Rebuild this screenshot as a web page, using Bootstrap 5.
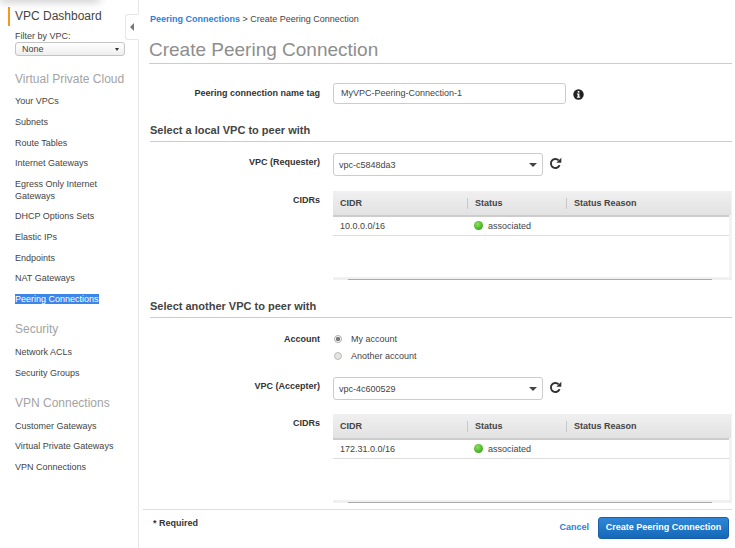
<!DOCTYPE html>
<html lang="en">
  <head>
    <meta charset="UTF-8" />
    <meta name="viewport" content="width=device-width, initial-scale=1.0" />
    <title>Create Peering Connection</title>
    <link
      rel="stylesheet"
      href="https://cdn.jsdelivr.net/npm/bootstrap@5.3.0/dist/css/bootstrap.min.css"
    />
    <style>
      html, body { height: 548px; overflow: hidden; }
      body { font-family: "Liberation Sans", Arial, sans-serif; font-size: 9px; color: #444; background: #fff; position: relative; }

      /* left nav */
      .side-nav { width: 139px; height: 548px; flex: none; border-right: 1px solid #e6e6e6; padding: 7px 0 0 15px; position: relative; }
      .top-shade { position: absolute; left: 0; top: -8px; width: 100px; height: 8px; box-shadow: 0 2px 8px rgba(0,0,0,.22); }
      .dash-title { font-size: 12px; line-height: 19px; color: #444; margin-left: -7px; padding-left: 5px; border-left: 2px solid #f7981d; height: 19px; }
      .filter-label { line-height: 12px; margin-top: 4px; color: #444; }
      .filter-select { width: 110px; height: 14px; border: 1px solid #c4c4c4; border-radius: 3px; background: linear-gradient(#fff, #eee); padding-left: 6px; line-height: 12px; color: #444; }
      .filter-caret { width: 0; height: 0; border-left: 2px solid transparent; border-right: 2px solid transparent; border-top: 3px solid #333; margin-right: 5px; }
      .nav-head { font-size: 12px; line-height: 16px; color: #a3a3a3; }
      .nav-head-first { margin-top: 15px; margin-bottom: 4px; }
      .nav-head-sec { margin-top: 11.6px; margin-bottom: 5px; }
      .nav-head-vpn { margin-top: 12.4px; margin-bottom: 4px; }
      .side-links { list-style: none; padding: 0; margin: 0; }
      .side-links li { line-height: 12px; padding: 4.32px 0; color: #444; }
      .side-links .active-link { background: #3b86e8; color: #fff; }
      .collapse-tab { position: absolute; left: 125px; top: 14px; width: 14px; height: 26px; background: #fff; border: 1px solid #e6e6e6; border-right: 1px solid #fff; border-radius: 3px 0 0 3px; }
      .collapse-tab span { border-top: 4px solid transparent; border-bottom: 4px solid transparent; border-right: 4px solid #777; }

      /* main column */
      .main-pane { width: 596px; flex: none; padding-left: 10px; }
      .crumbs { line-height: 12px; margin: 13px 0 0 1px; color: #444; }
      .crumbs b, .cancel-link { color: #2d7fd8; }
      .page-title { font-size: 19px; line-height: 26px; font-weight: 400; color: #8e8e8e; margin: 12px 0 0; height: 26px; border-bottom: 1px solid #ccc; width: 583px; box-sizing: content-box; }
      .form-line { display: flex; align-items: flex-start; }
      .line-label { width: 171px; flex: none; text-align: right; font-weight: 700; color: #333; margin-right: 13px; margin-bottom: 0; }
      .name-input { width: 233px; height: 21px; border: 1px solid #ccc; border-radius: 3px; padding: 0 7px 2px; font-size: 9px; color: #444; font-family: inherit; }
      .vpc-select.form-select { width: 210px; height: 23px; min-height: 0; border: 1px solid #ccc; border-radius: 3px; padding: 1px 5px 0; font-size: 9px; color: #444; line-height: 21px; box-shadow: none;
        background-size: 8px 4px; background-position: right 5px center;
        background-image: url("data:image/svg+xml,%3csvg xmlns='http://www.w3.org/2000/svg' viewBox='0 0 8 4'%3e%3cpath fill='%23444' d='M0 0h8L4 4z'/%3e%3c/svg%3e"); }
      .sect-head { font-size: 11px; line-height: 14px; font-weight: 700; color: #444; margin: 19px 0 0 1px; padding-bottom: 4px; border-bottom: 1px solid #ccc; width: 582px; }

      .mt-name { margin-top: 19px; }
      .name-label { line-height: 21px; }
      .info-ico { margin: 6px 0 0 7px; }
      .pick-line { margin-top: 11px; }
      .pick-line-two { margin-top: 15px; }
      .pick-label { line-height: 19px; }
      .refresh-ico { margin: 4px 0 0 6px; }
      .cidr-line { margin-top: 15px; }
      .cidr-line-two { margin-top: 14px; }
      .cidr-label { padding-top: 3px; line-height: 12px; }

      /* cidr tables */
      .cidr-wrap { width: 399px; height: 89px; background: linear-gradient(to left, #f3f3f3 3px, transparent 3px); }
      .cidr-grid { width: 399px; table-layout: fixed; margin: 0; border-collapse: collapse; font-size: 9px; color: #444; }
      .cidr-grid th { height: 25px; padding: 1px 0 0 7px; background: linear-gradient(#f0f0f0, #e2e2e2); border-bottom: 2px solid #ccc; color: #444; font-weight: 700; position: relative; box-shadow: none; vertical-align: middle; }
      .cidr-grid th + th { padding-left: 8px; }
      .cidr-grid th + th::before { content: ""; position: absolute; left: 0; top: 7px; height: 11px; border-left: 1px solid #c8c8c8; }
      .cidr-grid td { height: 19px; padding: 1px 0 0 7px; border-bottom: 1px solid #ddd; background: #fff; color: #444; box-shadow: none; vertical-align: middle; }
      .cidr-grid td:last-child { border-right: 3px solid #f3f3f3; }
      .c-one { width: 134px; }
      .c-two { width: 99px; }
      .green-dot { width: 9px; height: 9px; border-radius: 50%; background: radial-gradient(circle at 40% 35%, #8fe060, #3fae1e 70%); display: inline-block; margin-right: 5px; vertical-align: -1px; }
      .h-scroll { height: 3px; background: #f0f0f0; padding-left: 15px; padding-right: 20px; }
      .h-scroll div { height: 3px; border-bottom: 1px solid #aaa; }

      /* radios */
      .acct-line { margin-top: 15px; }
      .acct-line .line-label { line-height: 12px; margin-right: 14px; }
      .radio-stack { gap: 5px; }
      .radio-text { margin-left: 9px; }
      .acct-radio.form-check-input { width: 8px; height: 8px; margin: 0; border: 1px solid #bbb; background-color: #e4e4e4; flex: none; box-shadow: none; }
      .acct-radio.form-check-input:checked { border-color: #aaa; background-color: #fff; background-image: radial-gradient(circle, #777 0 2px, transparent 2.3px); background-size: auto; }
      .acct-option { line-height: 12px; color: #444; }

      /* footer */
      .foot-bar { width: 589px; margin-left: -6px; margin-top: 6px; padding: 7px 3px 0 10px; border-top: 1px solid #ddd; }
      .req-note { font-weight: 700; color: #333; line-height: 12px; }
      .cancel-link { font-weight: 700; text-decoration: none; margin-right: 9px; }
      .create-btn.btn { width: 131px; height: 22px; padding: 0; font-size: 9px; font-weight: 700; color: #fff; border: 1px solid #1a5ea8; border-radius: 3px; background: linear-gradient(#2f86d8, #1568b8); }
    </style>
  </head>
  <body class="d-flex">
    <!-- Sidebar -->
    <div class="side-nav">
      <div class="top-shade"></div>
      <div class="dash-title">VPC Dashboard</div>
      <div class="filter-label">Filter by VPC:</div>
      <div class="filter-select d-flex justify-content-between align-items-center">
        <span>None</span><span class="filter-caret"></span>
      </div>
      <div class="nav-head nav-head-first">Virtual Private Cloud</div>
      <ul class="side-links">
        <li>Your VPCs</li>
        <li>Subnets</li>
        <li>Route Tables</li>
        <li>Internet Gateways</li>
        <li>Egress Only Internet Gateways</li>
        <li>DHCP Options Sets</li>
        <li>Elastic IPs</li>
        <li>Endpoints</li>
        <li>NAT Gateways</li>
        <li><span class="active-link">Peering Connections</span></li>
      </ul>
      <div class="nav-head nav-head-sec">Security</div>
      <ul class="side-links">
        <li>Network ACLs</li>
        <li>Security Groups</li>
      </ul>
      <div class="nav-head nav-head-vpn">VPN Connections</div>
      <ul class="side-links">
        <li>Customer Gateways</li>
        <li>Virtual Private Gateways</li>
        <li>VPN Connections</li>
      </ul>
      <div class="collapse-tab d-flex align-items-center justify-content-center"><span></span></div>
    </div>

    <!-- Main -->
    <div class="main-pane">
      <div class="crumbs"><b>Peering Connections</b> &gt; Create Peering Connection</div>
      <h1 class="page-title">Create Peering Connection</h1>

      <div class="form-line mt-name">
        <label class="line-label name-label">Peering connection name tag</label>
        <input class="name-input" type="text" value="MyVPC-Peering-Connection-1" />
        <svg class="info-ico" width="11" height="11" viewBox="0 0 11 11">
          <circle cx="5.5" cy="5.5" r="5.2" fill="#222" />
          <rect x="4.7" y="2" width="1.7" height="1.6" fill="#fff" />
          <path d="M3.9 4.5h2.5v3.2h.8v1H3.9v-1h.8V5.5h-.8z" fill="#fff" />
        </svg>
      </div>

      <h2 class="sect-head">Select a local VPC to peer with</h2>
      <div class="form-line pick-line">
        <label class="line-label pick-label">VPC (Requester)</label>
        <select class="form-select vpc-select"><option>vpc-c5848da3</option></select>
        <svg class="refresh-ico" width="13" height="13" viewBox="0 0 13 13">
          <path d="M10.6 8.2A4.5 4.5 0 1 1 9.7 3.4" fill="none" stroke="#333" stroke-width="1.9" />
          <path d="M12.3 0.8v5h-5z" fill="#333" />
        </svg>
      </div>
      <div class="form-line cidr-line">
        <label class="line-label cidr-label">CIDRs</label>
        <div class="cidr-wrap d-flex flex-column justify-content-between">
          <table class="table cidr-grid">
            <thead><tr><th class="c-one">CIDR</th><th class="c-two">Status</th><th>Status Reason</th></tr></thead>
            <tbody><tr><td>10.0.0.0/16</td><td><span class="green-dot"></span>associated</td><td></td></tr></tbody>
          </table>
          <div class="h-scroll"><div></div></div>
        </div>
      </div>

      <h2 class="sect-head">Select another VPC to peer with</h2>
      <div class="form-line acct-line">
        <label class="line-label">Account</label>
        <div class="d-flex flex-column radio-stack">
          <label class="d-flex align-items-center acct-option"><input class="form-check-input acct-radio" type="radio" name="acct" checked /><span class="radio-text">My account</span></label>
          <label class="d-flex align-items-center acct-option"><input class="form-check-input acct-radio" type="radio" name="acct" /><span class="radio-text">Another account</span></label>
        </div>
      </div>
      <div class="form-line pick-line-two">
        <label class="line-label pick-label">VPC (Accepter)</label>
        <select class="form-select vpc-select"><option>vpc-4c600529</option></select>
        <svg class="refresh-ico" width="13" height="13" viewBox="0 0 13 13">
          <path d="M10.6 8.2A4.5 4.5 0 1 1 9.7 3.4" fill="none" stroke="#333" stroke-width="1.9" />
          <path d="M12.3 0.8v5h-5z" fill="#333" />
        </svg>
      </div>
      <div class="form-line cidr-line-two">
        <label class="line-label cidr-label">CIDRs</label>
        <div class="cidr-wrap d-flex flex-column justify-content-between">
          <table class="table cidr-grid">
            <thead><tr><th class="c-one">CIDR</th><th class="c-two">Status</th><th>Status Reason</th></tr></thead>
            <tbody><tr><td>172.31.0.0/16</td><td><span class="green-dot"></span>associated</td><td></td></tr></tbody>
          </table>
          <div class="h-scroll"><div></div></div>
        </div>
      </div>

      <div class="foot-bar d-flex justify-content-between align-items-start">
        <span class="req-note">* Required</span>
        <div class="d-flex align-items-center">
          <a class="cancel-link" href="#">Cancel</a>
          <button class="btn create-btn" type="button">Create Peering Connection</button>
        </div>
      </div>
    </div>
  </body>
</html>
